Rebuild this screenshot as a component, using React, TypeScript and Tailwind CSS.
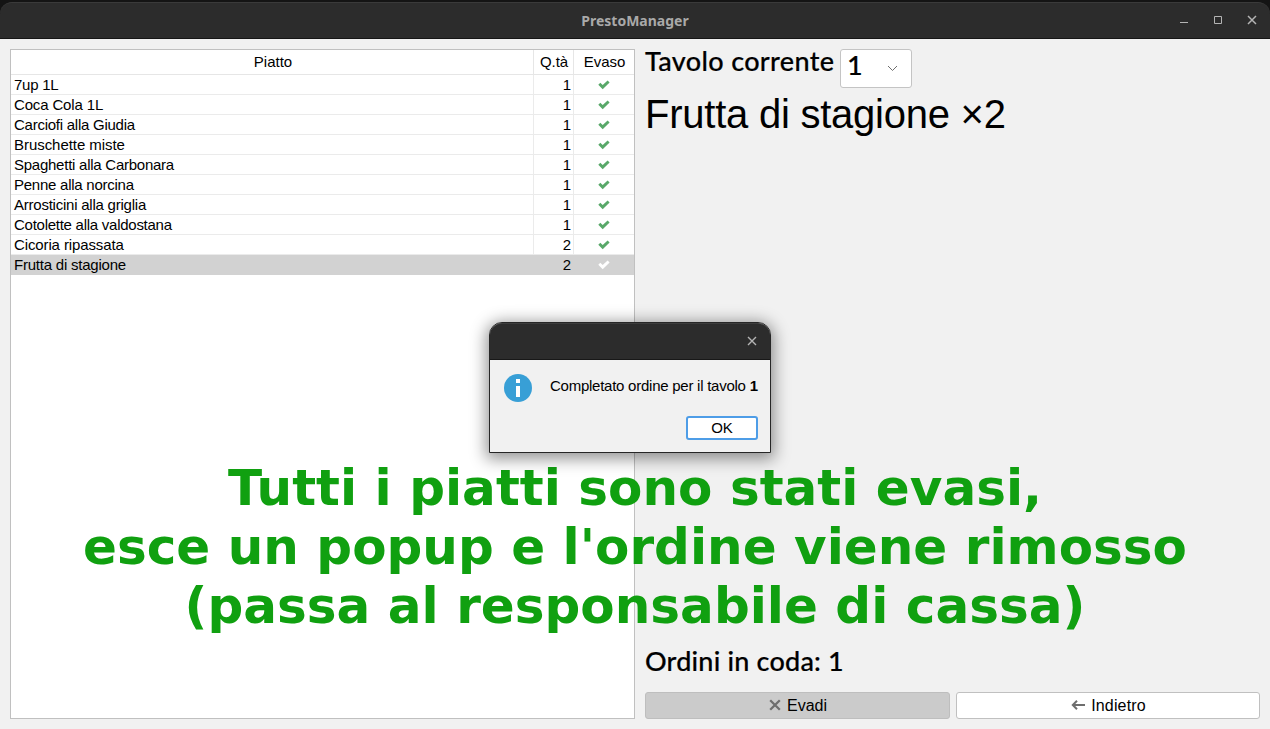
const dishes: { name: string; qty: number; tracking: string }[] = [
  { name: '7up 1L', qty: 1, tracking: 'tracking-[-0.25px]' },
  { name: 'Coca Cola 1L', qty: 1, tracking: 'tracking-[-0.15px]' },
  { name: 'Carciofi alla Giudia', qty: 1, tracking: 'tracking-[-0.25px]' },
  { name: 'Bruschette miste', qty: 1, tracking: 'tracking-[-0.05px]' },
  { name: 'Spaghetti alla Carbonara', qty: 1, tracking: 'tracking-[-0.25px]' },
  { name: 'Penne alla norcina', qty: 1, tracking: 'tracking-[-0.25px]' },
  { name: 'Arrosticini alla griglia', qty: 1, tracking: 'tracking-[-0.23px]' },
  { name: 'Cotolette alla valdostana', qty: 1, tracking: 'tracking-[-0.26px]' },
  { name: 'Cicoria ripassata', qty: 2, tracking: 'tracking-[-0.12px]' },
  { name: 'Frutta di stagione', qty: 2, tracking: 'tracking-[-0.22px]' },
];

function Check({ selected }: { selected: boolean }) {
  return (
    <svg width="12" height="10" viewBox="0 0 12 10" className={selected ? 'text-white' : 'text-[#59a869]'}>
      <path d="M.3 4.8 2.3 2.8 4.7 5 9.6.5 11.6 2.5 4.7 9.2Z" fill="currentColor" />
    </svg>
  );
}

function Cross({ size, width, className }: { size: number; width: number; className: string }) {
  return (
    <svg width={size} height={size} viewBox="0 0 10 10" className={className}>
      <path d="M1 1 9 9M9 1 1 9" fill="none" stroke="currentColor" strokeWidth={width} />
    </svg>
  );
}

function TitleBar() {
  return (
    <header className="h-[39px] shrink-0 bg-[#141414] pt-[2px]">
      <div className="grid h-[37px] grid-cols-[1fr_auto_1fr] items-center rounded-t-[12px] border-t border-b border-t-[#3a3a3a] border-b-[#161616] bg-[#2c2c2c]">
        <span />
        <h1 className="font-['Noto_Sans',sans-serif] text-[14px] leading-[20px] font-bold text-[#a9a9a9]">
          PrestoManager
        </h1>
        <div className="flex items-center justify-end gap-[25px] pr-[13px] pb-[2px] text-[#b4b4b4]">
          <svg width="8" height="8" viewBox="0 0 8 8" className="mr-px">
            <path d="M0 6.5H8" stroke="currentColor" />
          </svg>
          <svg width="8" height="8" viewBox="0 0 8 8">
            <path d="M.5.5h7v7h-7z" fill="none" stroke="currentColor" />
          </svg>
          <Cross size={10} width={1.5} className="" />
        </div>
      </div>
    </header>
  );
}

function OrderTable() {
  return (
    <section className="flex w-[625px] flex-col border border-[#c0c0c0] bg-white text-[15px]">
      <div className="grid h-[25px] grid-cols-[523px_40px_60px] border-b border-[#e6e6e6] text-center leading-[24px]">
        <span className="border-r border-[#e6e6e6] pl-[2px]">Piatto</span>
        <span className="border-r border-[#e6e6e6] pl-px tracking-[-0.1px]">Q.tà</span>
        <span className="pl-px">Evaso</span>
      </div>
      {dishes.map((d, i) => {
        const selected = i === dishes.length - 1;
        const line = selected ? 'border-[#d2d2d2]' : 'border-[#ebebeb]';
        return (
          <div
            key={d.name}
            className={`grid h-[20px] grid-cols-[523px_40px_60px] border-b leading-[20px] ${line} ${selected ? 'bg-[#d2d2d2]' : ''}`}
          >
            <span className={`border-r pl-[3px] ${d.tracking} ${line}`}>{d.name}</span>
            <span className={`border-r pr-[2px] text-right ${line}`}>{d.qty}</span>
            <span className="flex items-center justify-center">
              <Check selected={selected} />
            </span>
          </div>
        );
      })}
    </section>
  );
}

function OrderPanel() {
  return (
    <section className="flex flex-1 flex-col">
      <div className="flex h-[39px] gap-[6px] font-[Lato,sans-serif] text-[27px] font-medium [-webkit-text-stroke:0.2px_black]">
        <h2 className="w-[189px] leading-[23px] tracking-[0.34px] whitespace-nowrap">Tavolo corrente</h2>
        <button className="flex w-[72px] items-center justify-between rounded-[3px] border border-[#c4c4c4] bg-white pr-[13px] pl-[6px]">
          <span className="mb-[8px] leading-[27px]">1</span>
          <svg width="11" height="7" viewBox="0 0 11 7" className="text-[#6e6e6e]">
            <path d="M1 1 5.5 5.5 10 1" fill="none" stroke="currentColor" />
          </svg>
        </button>
      </div>
      <p className="mt-[3px] text-[40px] leading-[46px] tracking-[-0.24px] whitespace-nowrap">Frutta di stagione ×2</p>
      <div className="flex-1" />
      <p className="font-[Lato,sans-serif] text-[27px] leading-[32px] font-medium tracking-[0.2px] [-webkit-text-stroke:0.2px_black]">
        Ordini in coda: 1
      </p>
      <div className="mt-[15px] grid h-[27px] grid-cols-[305px_304px] gap-[6px] text-[16px]">
        <button className="flex items-center justify-center gap-[6px] rounded-[3px] border border-[#bebebe] bg-[#cbcbcb] pl-px">
          <Cross size={12} width={1.9} className="mb-px text-[#6e6e6e]" />
          Evadi
        </button>
        <button className="flex items-center justify-center gap-[6px] rounded-[3px] border border-[#c0c0c0] bg-white pl-px">
          <svg width="14" height="10" viewBox="0 0 14 10" className="mb-px text-[#6e6e6e]">
            <path d="M14 5H2M6 .8 1.8 5 6 9.2" fill="none" stroke="currentColor" strokeWidth="2" />
          </svg>
          <span className="tracking-[0.15px]">Indietro</span>
        </button>
      </div>
    </section>
  );
}

function Dialog() {
  return (
    <div className="absolute top-[322px] left-[489px] h-[131px] w-[282px] rounded-t-[13px] border border-[#262626] bg-[#f1f1f1] shadow-[0_3px_16px_3px_rgba(0,0,0,0.42)]">
      <div className="flex h-[37px] items-center justify-end rounded-t-[12px] border-t border-b border-t-[#3d3d3d] border-b-[#181818] bg-[#2c2c2c] pr-[13px] pb-px">
        <Cross size={10} width={1.4} className="text-[#b4b4b4]" />
      </div>
      <div className="flex pt-[14px] pl-[14px]">
        <svg width="28" height="28" viewBox="0 0 28 28">
          <circle cx="14" cy="14" r="14" fill="#389fd6" />
          <path d="M12 5h4v4h-4zM12 12h4v11h-4z" fill="#fff" />
        </svg>
        <p className="ml-[18px] text-[15px] leading-[24px] tracking-[-0.25px] whitespace-nowrap">
          Completato ordine per il tavolo <b>1</b>
        </p>
      </div>
      <div className="mt-[14px] flex justify-end pr-[12px]">
        <button className="h-[24px] w-[72px] rounded-[3px] border-2 border-[#4e9de7] bg-white text-[15px] leading-[20px]">OK</button>
      </div>
    </div>
  );
}

export default function App() {
  return (
    <div className="relative flex h-[729px] w-[1270px] flex-col overflow-hidden bg-[#f1f1f1] font-['Liberation_Sans',sans-serif] text-black">
      <TitleBar />
      <main className="flex flex-1 gap-[10px] p-[10px]">
        <OrderTable />
        <OrderPanel />
      </main>
      <p className="absolute top-[459px] left-0 w-[1270px] text-center font-['DejaVu_Sans',sans-serif] text-[50px] leading-[59px] font-bold tracking-[0.02px] whitespace-pre-line text-[#10a010]">
        {"Tutti i piatti sono stati evasi,\nesce un popup e l'ordine viene rimosso\n(passa al responsabile di cassa)"}
      </p>
      <Dialog />
    </div>
  );
}
